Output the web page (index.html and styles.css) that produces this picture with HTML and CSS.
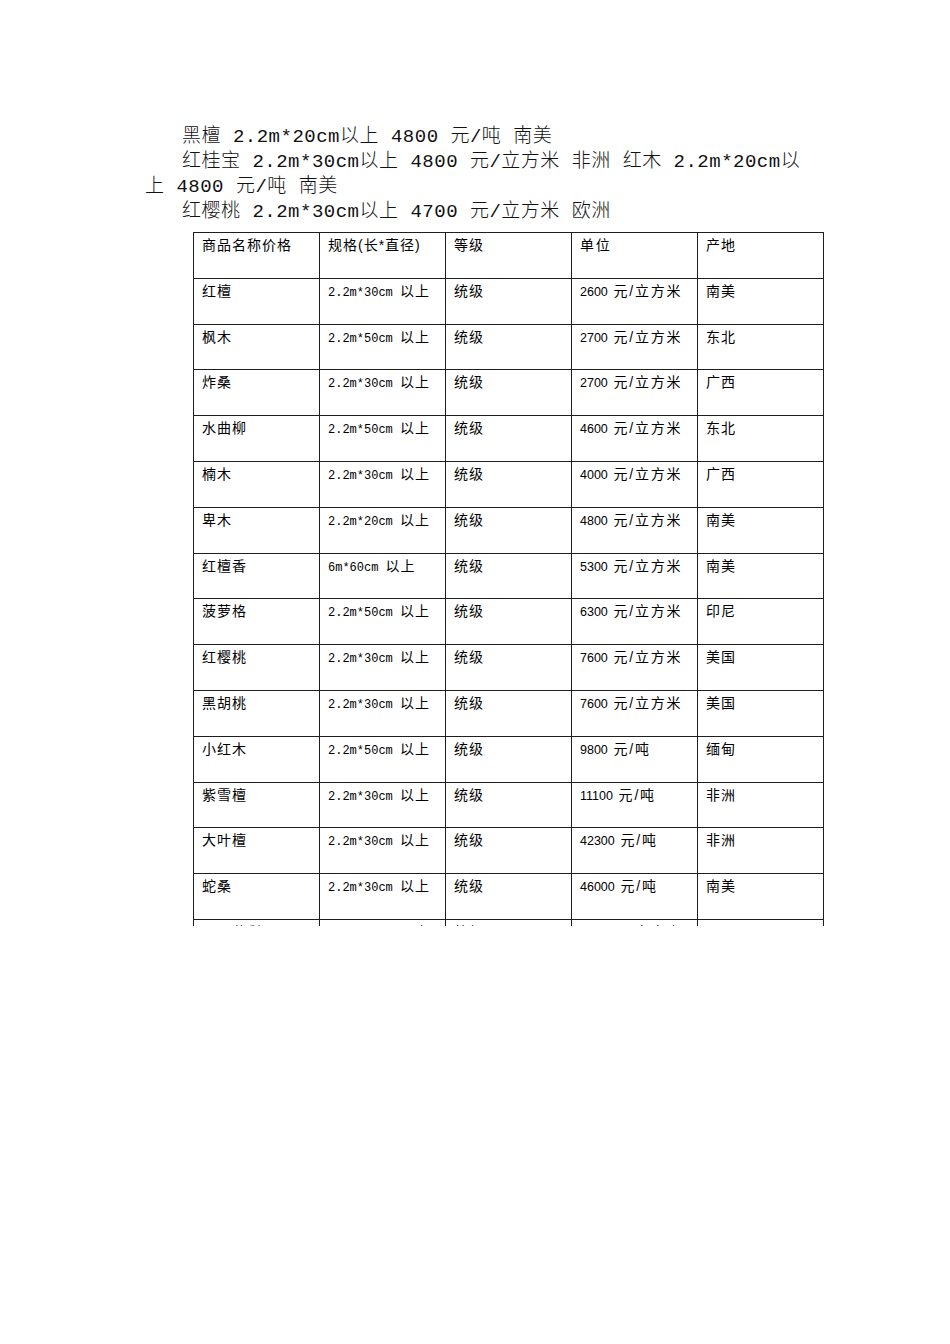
FILE: index.html
```html
<!DOCTYPE html>
<html lang="zh-CN">
<head>
<meta charset="utf-8">
<title>木材价格</title>
<link rel="stylesheet" href="styles.css">
</head>
<body>
<main class="page">
  <section class="intro">
    <p>黑檀 2.2m*20cm以上 4800 元/吨 南美</p>
    <p>红桂宝 2.2m*30cm以上 4800 元/立方米 非洲 红木 2.2m*20cm以上 4800 元/吨 南美</p>
    <p>红樱桃 2.2m*30cm以上 4700 元/立方米 欧洲</p>
  </section>
  <div class="table-clip">
    <table class="price">
      <colgroup><col><col><col><col><col></colgroup>
      <thead>
        <tr><th>商品名称价格</th><th>规格(长*直径)</th><th>等级</th><th>单位</th><th>产地</th></tr>
      </thead>
      <tbody>
        <tr><td>红檀</td><td><span class="sz">2.2m*30cm </span>以上</td><td>统级</td><td><span class="n">2600</span> 元/立方米</td><td>南美</td></tr>
        <tr><td>枫木</td><td><span class="sz">2.2m*50cm </span>以上</td><td>统级</td><td><span class="n">2700</span> 元/立方米</td><td>东北</td></tr>
        <tr><td>炸桑</td><td><span class="sz">2.2m*30cm </span>以上</td><td>统级</td><td><span class="n">2700</span> 元/立方米</td><td>广西</td></tr>
        <tr><td>水曲柳</td><td><span class="sz">2.2m*50cm </span>以上</td><td>统级</td><td><span class="n">4600</span> 元/立方米</td><td>东北</td></tr>
        <tr><td>楠木</td><td><span class="sz">2.2m*30cm </span>以上</td><td>统级</td><td><span class="n">4000</span> 元/立方米</td><td>广西</td></tr>
        <tr><td>卑木</td><td><span class="sz">2.2m*20cm </span>以上</td><td>统级</td><td><span class="n">4800</span> 元/立方米</td><td>南美</td></tr>
        <tr><td>红檀香</td><td><span class="sz">6m*60cm </span>以上</td><td>统级</td><td><span class="n">5300</span> 元/立方米</td><td>南美</td></tr>
        <tr><td>菠萝格</td><td><span class="sz">2.2m*50cm </span>以上</td><td>统级</td><td><span class="n">6300</span> 元/立方米</td><td>印尼</td></tr>
        <tr><td>红樱桃</td><td><span class="sz">2.2m*30cm </span>以上</td><td>统级</td><td><span class="n">7600</span> 元/立方米</td><td>美国</td></tr>
        <tr><td>黑胡桃</td><td><span class="sz">2.2m*30cm </span>以上</td><td>统级</td><td><span class="n">7600</span> 元/立方米</td><td>美国</td></tr>
        <tr><td>小红木</td><td><span class="sz">2.2m*50cm </span>以上</td><td>统级</td><td><span class="n">9800</span> 元/吨</td><td>缅甸</td></tr>
        <tr><td>紫雪檀</td><td><span class="sz">2.2m*30cm </span>以上</td><td>统级</td><td><span class="n">11100</span> 元/吨</td><td>非洲</td></tr>
        <tr><td>大叶檀</td><td><span class="sz">2.2m*30cm </span>以上</td><td>统级</td><td><span class="n">42300</span> 元/吨</td><td>非洲</td></tr>
        <tr><td>蛇桑</td><td><span class="sz">2.2m*30cm </span>以上</td><td>统级</td><td><span class="n">46000</span> 元/吨</td><td>南美</td></tr>
        <tr><td>巴西花梨</td><td><span class="sz">2.2m*30cm </span>以上</td><td>统级</td><td><span class="n">8800</span> 元/立方米</td><td>巴西</td></tr>
      </tbody>
    </table>
  </div>
</main>
</body>
</html>
```

FILE: styles.css
```css
html, body {
  margin: 0;
  padding: 0;
  background: #ffffff;
}

.page {
  width: 950px;
  height: 1344px;
  box-sizing: border-box;
  padding-top: 125px;
  overflow: hidden;
}

.intro {
  margin-left: 145px;
  width: 665px;
  font-family: "Liberation Mono", "Noto Sans CJK SC", monospace;
  font-size: 19px;
  font-weight: 300;
  line-height: 25px;
  letter-spacing: 0.5px;
  color: #111111;
}

.intro p {
  margin: 0;
  text-indent: 37px;
}

.table-clip {
  margin: 7px 0 0 193px;
  width: 632px;
  height: 694px;
  overflow: hidden;
}

.price {
  border-collapse: collapse;
  table-layout: fixed;
  width: 630px;
  font-family: "Liberation Sans", "Noto Sans CJK SC", sans-serif;
  font-size: 14px;
  line-height: 16px;
  letter-spacing: 1px;
  color: #000000;
}

.price col {
  width: 126px;
}

.price tr {
  height: 45.8px;
}

.price th,
.price td {
  border: 1px solid #1e1e1e;
  padding: 4px 0 0 8px;
  vertical-align: top;
  text-align: left;
  font-weight: normal;
  white-space: nowrap;
}

.price th:nth-child(4),
.price td:nth-child(4) {
  letter-spacing: 1.8px;
}

.sz {
  font-family: "Liberation Mono", monospace;
  font-size: 12px;
  letter-spacing: 0;
}

.n {
  font-size: 12.5px;
  letter-spacing: 0;
}
```
